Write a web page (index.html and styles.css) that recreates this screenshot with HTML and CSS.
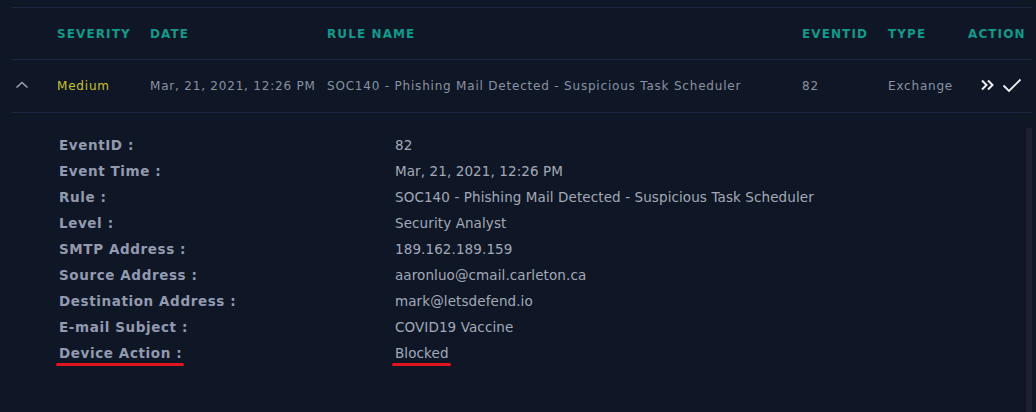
FILE: index.html
```html
<!DOCTYPE html>
<html>
<head>
<meta charset="utf-8">
<link rel="stylesheet" href="styles.css">
</head>
<body>
<div class="panel">
  <div class="table">
    <div class="row head">
      <div class="cell toggle"></div>
      <div class="cell">SEVERITY</div>
      <div class="cell">DATE</div>
      <div class="cell">RULE NAME</div>
      <div class="cell">EVENTID</div>
      <div class="cell">TYPE</div>
      <div class="cell">ACTION</div>
    </div>
    <div class="row data">
      <div class="cell toggle">
        <svg width="14" height="8" viewBox="0 0 14 8"><path d="M1.5 6.5 L7 1.5 L12.5 6.5" fill="none" stroke="#9aa1b3" stroke-width="1.6"/></svg>
      </div>
      <div class="cell medium">Medium</div>
      <div class="cell">Mar, 21, 2021, 12:26 PM</div>
      <div class="cell">SOC140 - Phishing Mail Detected - Suspicious Task Scheduler</div>
      <div class="cell">82</div>
      <div class="cell">Exchange</div>
      <div class="cell actions">
        <svg width="16" height="12" viewBox="0 0 16 12"><path d="M2 1.5 L6.5 6 L2 10.5 M8 1.5 L12.5 6 L8 10.5" fill="none" stroke="#eef0f4" stroke-width="2"/></svg>
        <svg width="20" height="15" viewBox="0 0 20 15"><path d="M1.5 7.5 L7 13 L18.5 1.5" fill="none" stroke="#eef0f4" stroke-width="1.8"/></svg>
      </div>
    </div>
  </div>
  <div class="details">
    <div class="scroll">
      <div class="drow"><span class="label">EventID :</span><span class="value">82</span></div>
      <div class="drow"><span class="label">Event Time :</span><span class="value">Mar, 21, 2021, 12:26 PM</span></div>
      <div class="drow"><span class="label">Rule :</span><span class="value">SOC140 - Phishing Mail Detected - Suspicious Task Scheduler</span></div>
      <div class="drow"><span class="label">Level :</span><span class="value">Security Analyst</span></div>
      <div class="drow"><span class="label">SMTP Address :</span><span class="value">189.162.189.159</span></div>
      <div class="drow"><span class="label">Source Address :</span><span class="value">aaronluo@cmail.carleton.ca</span></div>
      <div class="drow"><span class="label">Destination Address :</span><span class="value">mark@letsdefend.io</span></div>
      <div class="drow"><span class="label">E-mail Subject :</span><span class="value">COVID19 Vaccine</span></div>
      <div class="drow"><span class="label"><span class="mark">Device Action :</span></span><span class="value"><span class="mark">Blocked</span></span></div>
    </div>
    <div class="scrollbar"></div>
  </div>
</div>
</body>
</html>
```
FILE: styles.css
```css
html, body {
  margin: 0;
  padding: 0;
  background: #0f1726;
  height: 100%;
  overflow: hidden;
}
body {
  font-family: "DejaVu Sans", sans-serif;
}
.panel {
  padding: 7px 4px 0 11px;
}
.table {
  border-top: 1px solid #1b2440;
}
.row {
  display: grid;
  grid-template-columns: 46px 93px 177px 475px 86px 80px 1fr;
  align-items: center;
  border-bottom: 1px solid #1b2440;
}
.head {
  height: 51px;
  color: #14998a;
  font-weight: bold;
  font-size: 12px;
  letter-spacing: 1.1px;
}
.data {
  height: 52px;
  color: #8a91a2;
  font-size: 12px;
  letter-spacing: 0.8px;
}
.toggle {
  padding-left: 4px;
  display: flex;
  align-items: center;
  margin-top: -3px;
}
.medium {
  color: #c9c22b;
}
.actions {
  display: flex;
  align-items: center;
  gap: 6px;
  padding-left: 12px;
  margin-top: -2px;
}
.details {
  display: flex;
  padding-top: 19px;
}
.scroll {
  flex: 1;
  padding-left: 48px;
}
.drow {
  display: grid;
  grid-template-columns: 336px 1fr;
  height: 26px;
  align-items: center;
  font-size: 13.5px;
}
.label {
  color: #939ab0;
  font-weight: bold;
  letter-spacing: 0.6px;
}
.value {
  color: #a3a9b8;
  letter-spacing: 0.1px;
}
.mark {
  position: relative;
}
.mark::after {
  content: "";
  position: absolute;
  left: -3px;
  right: -2px;
  bottom: -5px;
  height: 3px;
  border-radius: 2px;
  background: #e3141c;
}
.scrollbar {
  width: 6px;
  margin-top: -4px;
  height: 300px;
  background: #1e1f31;
}
```
